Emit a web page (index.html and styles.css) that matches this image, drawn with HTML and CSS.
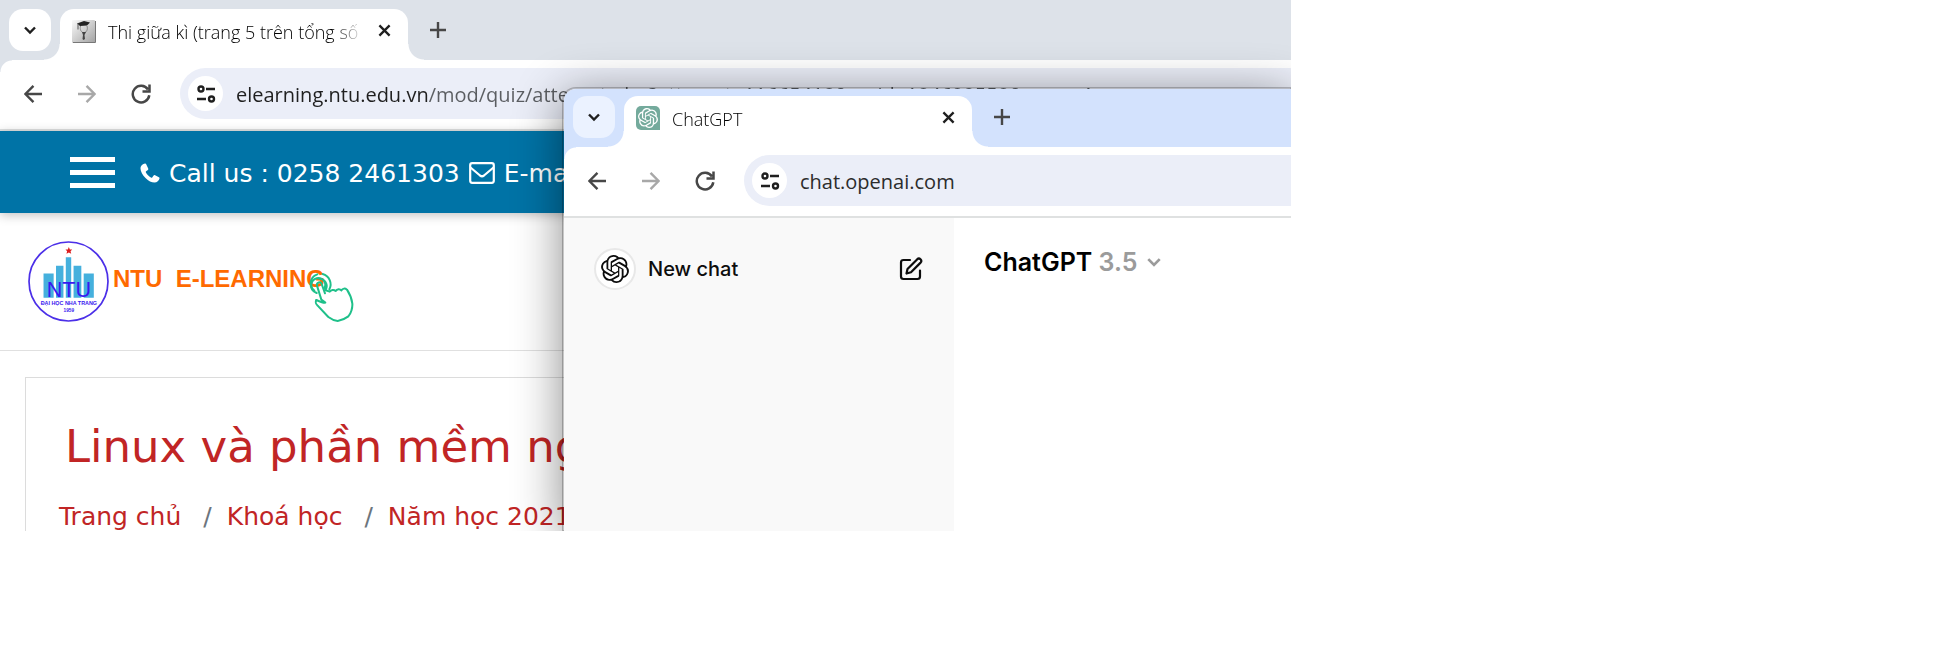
FILE: index.html
```html
<!DOCTYPE html>
<html lang="vi">
<head>
<meta charset="utf-8">
<title>Thi giữa kì</title>
<link rel="stylesheet" href="styles.css">
</head>
<body>
<svg class="defs" aria-hidden="true">
  <symbol id="chevron" viewBox="0 0 14 14"><path d="M2 4.500l5 5 5-5" fill="none" stroke="currentColor" stroke-width="2.400"/></symbol>
  <symbol id="close" viewBox="0 0 14 14"><path d="M1.500 1.500l11 11M12.500 1.500l-11 11" fill="none" stroke="currentColor" stroke-width="2.500"/></symbol>
  <symbol id="plus" viewBox="0 0 16 16"><path d="M8 0v16M0 8h16" fill="none" stroke="currentColor" stroke-width="2.400"/></symbol>
  <symbol id="back" viewBox="0 0 20 20"><path d="M20 10H2.500M10.500 1L1.500 10l9 9" fill="none" stroke="currentColor" stroke-width="2.700"/></symbol>
  <symbol id="forward" viewBox="0 0 20 20"><path d="M0 10h17.500M9.500 1l9 9-9 9" fill="none" stroke="currentColor" stroke-width="2.700"/></symbol>
  <symbol id="reload" viewBox="0 0 20 20"><path d="M17 5.500A8.300 8.300 0 1 0 18.300 11.300M18.500 0.500v7h-7" fill="none" stroke="currentColor" stroke-width="2.500"/></symbol>
  <symbol id="tune" viewBox="0 0 20 18"><g fill="none" stroke="currentColor" stroke-width="2.400"><circle cx="5" cy="4" r="2.500"/><path d="M10 4h9M1 14h9"/><circle cx="15.500" cy="14" r="2.500"/></g></symbol>
  <symbol id="openai" viewBox="0 0 24 24"><path fill="currentColor" d="M22.2819 9.8211a5.9847 5.9847 0 0 0-.5157-4.9108 6.0462 6.0462 0 0 0-6.5098-2.9A6.0651 6.0651 0 0 0 4.9807 4.1818a5.9847 5.9847 0 0 0-3.9977 2.9 6.0462 6.0462 0 0 0 .7427 7.0966 5.98 5.98 0 0 0 .511 4.9107 6.051 6.051 0 0 0 6.5146 2.9001A5.9847 5.9847 0 0 0 13.2599 24a6.0557 6.0557 0 0 0 5.7718-4.2058 5.9894 5.9894 0 0 0 3.9977-2.9001 6.0557 6.0557 0 0 0-.7475-7.0729zm-9.022 12.6081a4.4755 4.4755 0 0 1-2.8764-1.0408l.1419-.0804 4.7783-2.7582a.7948.7948 0 0 0 .3927-.6813v-6.7369l2.02 1.1686a.071.071 0 0 1 .038.052v5.5826a4.504 4.504 0 0 1-4.4945 4.4944zm-9.6607-4.1254a4.4708 4.4708 0 0 1-.5346-3.0137l.142.0852 4.783 2.7582a.7712.7712 0 0 0 .7806 0l5.8428-3.3685v2.3324a.0804.0804 0 0 1-.0332.0615L9.74 19.9502a4.4992 4.4992 0 0 1-6.1408-1.6464zM2.3408 7.8956a4.485 4.485 0 0 1 2.3655-1.9728V11.6a.7664.7664 0 0 0 .3879.6765l5.8144 3.3543-2.0201 1.1685a.0757.0757 0 0 1-.071 0l-4.8303-2.7865A4.504 4.504 0 0 1 2.3408 7.872zm16.5963 3.8558L13.1038 8.364 15.1192 7.2a.0757.0757 0 0 1 .071 0l4.8303 2.7913a4.4944 4.4944 0 0 1-.6765 8.1042v-5.6772a.79.79 0 0 0-.407-.667zm2.0107-3.0231l-.142-.0852-4.7735-2.7818a.7759.7759 0 0 0-.7854 0L9.409 9.2297V6.8974a.0662.0662 0 0 1 .0284-.0615l4.8303-2.7866a4.4992 4.4992 0 0 1 6.6802 4.66zM8.3065 12.863l-2.02-1.1638a.0804.0804 0 0 1-.038-.0567V6.0742a4.4992 4.4992 0 0 1 7.3757-3.4537l-.142.0805L8.704 5.459a.7948.7948 0 0 0-.3927.6813zm1.0976-2.3654l2.602-1.4998 2.6069 1.4998v2.9994l-2.5974 1.4997-2.6067-1.4997Z"/></symbol>
</svg>

<div class="desktop">
  <section class="browser browser-back">
    <header class="tabstrip">
      <button class="tab-search" type="button" aria-label="Search tabs"><svg class="i14"><use href="#chevron"/></svg></button>
      <div class="tab">
        <svg class="favicon" viewBox="0 0 24 24">
          <defs><linearGradient id="fav" x1="0" y1="0" x2="1" y2="1"><stop offset="0" stop-color="#fafafa"/><stop offset="1" stop-color="#a2a2a2"/></linearGradient></defs>
          <rect width="23" height="23" rx="1" y="1" fill="url(#fav)"/><path d="M1 23.500h22.500V2" fill="none" stroke="#777"/>
          <path d="M5 4.500L12 2l6 1.500-3 3-7 .5z" fill="#222"/><path d="M6 4.500v6" stroke="#555"/>
          <path d="M8.500 7c-1 4 1 6 3 7M15 7c1 3 0 6-3 7" fill="none" stroke="#888"/>
          <path d="M10 13h4l-1.500 3 .5 4-1.500 1-1-1 .5-4z" fill="#444"/>
        </svg>
        <span class="tab-title">Thi giữa kì (trang 5 trên tổng số</span>
        <button class="tab-close" type="button" aria-label="Close tab"><svg class="i13"><use href="#close"/></svg></button>
      </div>
      <button class="tab-new" type="button" aria-label="New tab"><svg class="i16"><use href="#plus"/></svg></button>
    </header>
    <nav class="toolbar">
      <button type="button" aria-label="Back"><svg class="i18"><use href="#back"/></svg></button>
      <button type="button" aria-label="Forward" disabled><svg class="i18"><use href="#forward"/></svg></button>
      <button type="button" aria-label="Reload"><svg class="i20"><use href="#reload"/></svg></button>
      <div class="omnibox">
        <button class="site-info" type="button" aria-label="Site information"><svg class="i20"><use href="#tune"/></svg></button>
        <input class="url url-two-tone" type="text" aria-label="Address" value="elearning.ntu.edu.vn/mod/quiz/attempt.php?attempt=11665418&amp;cmid=184699558&amp;page=4">
      </div>
    </nav>
    <div class="contact-bar">
      <button class="menu" type="button" aria-label="Menu"><span></span><span></span><span></span></button>
      <p class="contact">
        <svg class="phone" viewBox="0 0 20 20"><path fill="currentColor" d="M5 .5C3 .8.500 2.500.500 5.500c0 3 2 6.500 5 9.500s6 4.500 9 4.500c2.500 0 4.500-2 5-4 .1-.8 0-1-.6-1.300l-3.800-2c-.6-.3-1-.2-1.500.4l-1.400 1.800c-.4.4-.8.4-1.300.1-2.200-1.200-3.800-2.800-5-5-.3-.5-.2-.9.2-1.200L7.900 7c.5-.5.6-.9.300-1.500l-2-4.300C5.900.6 5.600.4 5 .5z"/></svg>
        <span>Call us : 0258 2461303</span>
        <svg class="mail" viewBox="0 0 26 22"><rect x="1.200" y="1.200" width="23.600" height="19.600" rx="2" fill="none" stroke="currentColor" stroke-width="2.200"/><path d="M1.500 5.500l9.500 8q2 1.500 4 0l9.500-8" fill="none" stroke="currentColor" stroke-width="2.200"/></svg>
        <span>E-mail</span>
      </p>
    </div>
    <div class="brand">
      <svg class="emblem" viewBox="0 0 240 240">
        <circle cx="120" cy="120" r="117" fill="none" stroke="#4b2fe8" stroke-width="5"/>
        <path fill="#45b0dd" d="M46 96h30v72H46zM83 73h22v95H83zM112 48h16v120h-16zM135 73h23v95h-23zM165 96h30v72h-30z"/>
        <path fill="#dc1c1c" d="M121 18l3 7h7l-5 5 2 8-7-4-7 4 2-8-5-5h7z"/>
        <text class="emblem-name" x="121" y="167">NTU</text>
        <text class="emblem-school" x="121" y="191">ĐẠI HỌC NHA TRANG</text>
        <text class="emblem-year" x="121" y="211">1959</text>
      </svg>
      <span class="brand-name">NTU&nbsp; E-LEARNING</span>
      <svg class="hand" viewBox="382 124 144 150">
        <g fill="none" stroke="#1fc08a" stroke-width="6" stroke-linecap="round" stroke-linejoin="round">
          <path d="M410 208c-4 9-2 12 4 17l32 34c8 6 18 11 28 12 12-2 24-8 32-14 8-8 13-26 12-38-2-16-8-30-16-42-6-5-13-4-17 2-4-5-13-5-17 2-5-5-14-4-18 2l-14-5"/>
          <path d="M436 188l-10-28c-3-9-16-5-14 5l13 42 12 9c-6 2-20-5-27-8"/>
          <path d="M404 180a21 21 0 1 1 31-8M411 187a30 30 0 0 1 2-56M429 130a32 32 0 0 1 20 46M418 144a22 22 0 0 1 20 33"/>
        </g>
      </svg>
    </div>
    <main class="course">
      <h1>Linux và phần mềm nguồn mở</h1>
      <nav class="crumbs">
        <a href="#">Trang chủ</a><span>/</span><a href="#">Khoá học</a><span>/</span><a href="#">Năm học 2021</a>
      </nav>
    </main>
  </section>

  <section class="browser browser-front">
    <header class="tabstrip">
      <button class="tab-search" type="button" aria-label="Search tabs"><svg class="i14"><use href="#chevron"/></svg></button>
      <div class="tab">
        <span class="favicon gpt-favicon"><svg class="i20"><use href="#openai"/></svg></span>
        <span class="tab-title">ChatGPT</span>
        <button class="tab-close" type="button" aria-label="Close tab"><svg class="i13"><use href="#close"/></svg></button>
      </div>
      <button class="tab-new" type="button" aria-label="New tab"><svg class="i16"><use href="#plus"/></svg></button>
    </header>
    <nav class="toolbar">
      <button type="button" aria-label="Back"><svg class="i18"><use href="#back"/></svg></button>
      <button type="button" aria-label="Forward" disabled><svg class="i18"><use href="#forward"/></svg></button>
      <button type="button" aria-label="Reload"><svg class="i20"><use href="#reload"/></svg></button>
      <div class="omnibox">
        <button class="site-info" type="button" aria-label="Site information"><svg class="i20"><use href="#tune"/></svg></button>
        <input class="url" type="text" aria-label="Address" value="chat.openai.com">
      </div>
    </nav>
    <div class="chat">
      <aside class="sidebar">
        <button class="new-chat" type="button">
          <span class="avatar"><svg class="i28"><use href="#openai"/></svg></span>
          <span class="new-chat-label">New chat</span>
          <svg class="edit" viewBox="0 0 24 24"><g fill="none" stroke="currentColor" stroke-width="2.200" stroke-linejoin="round" stroke-linecap="round"><path d="M11 3H4.500Q2 3 2 5.500v14Q2 22 4.500 22h14q2.500 0 2.500-2.500V13.500"/><path d="M18.300 2.200q1.600-1.400 3.200.1 1.600 1.700.1 3.300L12 15.200 7.500 16.500 8.500 12z"/></g></svg>
        </button>
      </aside>
      <div class="conversation">
        <button class="model" type="button"><span>ChatGPT <span class="version">3.5</span></span><svg class="i16"><use href="#chevron"/></svg></button>
      </div>
    </div>
  </section>
</div>
</body>
</html>
```
FILE: styles.css
```css
* { box-sizing: border-box; }
body { margin: 0; background: #fff; font-family: "Open Sans", "Noto Sans", sans-serif; color: #1f1f1f; }
button { border: 0; padding: 0; background: none; color: inherit; font: inherit; display: flex; align-items: center; justify-content: center; }
a { text-decoration: none; }
svg { display: block; flex: none; }
.defs { position: absolute; width: 0; height: 0; }
.i13 { width: 13px; height: 13px; }
.i14 { width: 14px; height: 14px; }
.i16 { width: 16px; height: 16px; }
.i18 { width: 18px; height: 18px; }
.i20 { width: 20px; height: 20px; }
.i28 { width: 28px; height: 28px; }

.desktop { position: relative; width: 66.45%; height: 81.5vh; overflow: hidden; }
.browser { background: #fff; --strip: #dde2e9; --search: #fff; }
.browser-front {
  --strip: #d3e2fd; --search: #ebf2ff;
  position: absolute; left: 562px; top: 87px; right: 0; bottom: 0;
  display: flex; flex-direction: column;
  border: solid rgba(0, 0, 0, .22); border-width: 2px 0 0 2px; border-top-left-radius: 14px;
  background-clip: padding-box;
  box-shadow: 0 8px 48px rgba(0, 0, 0, .45);
}

.tabstrip { display: flex; align-items: flex-start; padding: 9px 9px 0; height: 60px; background: var(--strip); }
.browser-front .tabstrip { padding-top: 7px; height: 58px; border-top-left-radius: 12px; }
.tab-search { width: 42px; height: 42px; border-radius: 14px; background: var(--search); }
.tab {
  position: relative; display: flex; align-items: center; width: 348px; height: 51px; margin-left: 9px;
  padding: 0 16px 8px 12px; background: #fff; border-radius: 14px 14px 0 0;
}
.tab::before, .tab::after { content: ""; position: absolute; bottom: 0; width: 16px; height: 16px; }
.tab::before { right: 100%; background: radial-gradient(circle at 0 0, transparent 15px, #fff 16px); }
.tab::after { left: 100%; background: radial-gradient(circle at 100% 0, transparent 15px, #fff 16px); }
.favicon { width: 24px; height: 24px; flex: none; }
.gpt-favicon { display: flex; align-items: center; justify-content: center; background: #74aa9c; color: #fff; border-radius: 5px 5px 0 5px; }
.tab-title {
  flex: 1; margin: 2px 12px 0 12px; overflow: hidden; white-space: nowrap; font-size: 18px; line-height: 24px; font-weight: 300; color: #000;
  mask-image: linear-gradient(90deg, #000 88%, transparent);
}
.tab-close { width: 16px; height: 24px; }
.tab-new { width: 40px; height: 42px; margin-left: 10px; color: #474747; }

.toolbar {
  display: flex; align-items: center; height: 71px; padding: 9px 0 11px 15px; gap: 18px; border-bottom: 2px solid #dfe1e1;
  background: radial-gradient(circle at 12px 12px, #fff 11px, var(--strip) 12px) 0 0 / 12px 12px no-repeat;
}
.toolbar > button { width: 36px; height: 36px; color: #474747; }
.toolbar > button:disabled { color: #a8a8a8; }
.omnibox { flex: 1; min-width: 0; display: flex; align-items: center; height: 51px; margin-left: 3px; padding-left: 8px; background: #ebeef8; border-radius: 26px 0 0 26px; }
.site-info { width: 35px; height: 35px; flex: none; border-radius: 50%; background: #fff; }
.url { flex: 1; min-width: 0; height: 36px; margin-left: 13px; padding: 1px 0 0; border: 0; background: none; font: 20px "Open Sans", "Noto Sans", sans-serif; color: #2c2c2c; }
.url-two-tone { color: transparent; background: linear-gradient(90deg, #1f1f1f 192px, #5a5d61 192px); background-clip: text; -webkit-background-clip: text; }

.contact-bar { display: flex; align-items: center; height: 82px; padding-left: 70px; background: #0073a6; color: #fff; box-shadow: 0 2px 10px rgba(0, 0, 0, .25); }
.menu { flex-direction: column; gap: 8px; width: 45px; }
.menu span { width: 100%; height: 5px; background: #fff; }
.contact { display: flex; align-items: center; gap: 9px; margin: 0 0 0 25px; padding-top: 2px; font: 25px "DejaVu Sans", sans-serif; white-space: nowrap; }
.phone { width: 20px; height: 20px; }
.mail { width: 26px; height: 22px; }

.brand { display: flex; height: 138px; padding: 28px 0 0 28px; border-bottom: 1px solid #e0e0e0; }
.emblem { width: 81px; height: 81px; }
.emblem text { text-anchor: middle; fill: #3a18f0; font-family: "Liberation Sans", sans-serif; }
.emblem .emblem-name { font-size: 64px; }
.emblem .emblem-school { font-size: 16px; font-weight: 700; }
.emblem .emblem-year { font-size: 14px; font-weight: 700; }
.brand-name { margin: 19px 0 0 4px; font: 700 24px/38px "Liberation Sans", sans-serif; color: #ff6a00; white-space: nowrap; }
.hand { width: 48px; height: 50px; margin: 31px 0 0 -18px; }

.course { margin: 26px 0 0 25px; padding: 41px 0 0 33px; border: solid #dcdcdc; border-width: 1px 0 0 1px; color: #c12525; font-family: "DejaVu Sans", sans-serif; white-space: nowrap; }
.course h1 { margin: 0 0 0 6px; font-size: 45px; font-weight: 400; line-height: 56px; }
.crumbs { display: flex; margin-top: 26px; font-size: 25px; line-height: 32px; }
.crumbs a { color: inherit; }
.crumbs span { margin: 0 15px 0 22px; color: #6c757d; }

.chat { flex: 1; display: flex; font-family: Inter, "Liberation Sans", sans-serif; color: #0d0d0d; }
.sidebar { width: 390px; padding: 30px 31px 0 30px; background: #f9f9f9; }
.new-chat { width: 100%; height: 42px; }
.avatar { display: flex; align-items: center; justify-content: center; width: 42px; height: 42px; border: 2px solid #e8e8e8; border-radius: 50%; background: #fff; }
.new-chat-label { flex: 1; margin-left: 12px; text-align: left; font-size: 20px; font-weight: 500; }
.edit { width: 24px; height: 24px; }
.conversation { padding: 28px 0 0 30px; }
.model { gap: 9px; font-size: 25px; line-height: 32px; font-weight: 600; color: #000; }
.model svg, .version { color: #9b9b9b; }
```
